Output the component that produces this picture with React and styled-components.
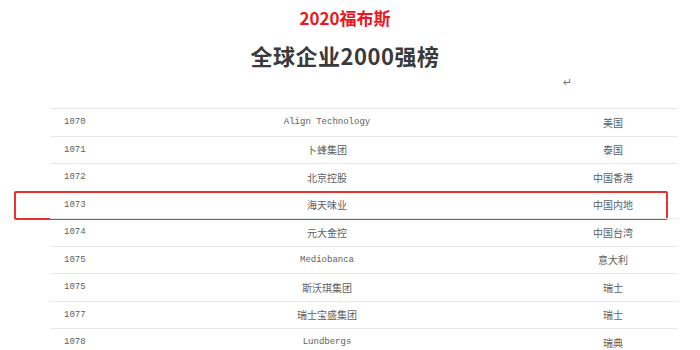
import React from 'react'
import styled, { createGlobalStyle } from 'styled-components'

const rows = [
  { no: '1070', name: 'Align Technology', latin: true, country: '美国' },
  { no: '1071', name: '卜蜂集团', country: '泰国' },
  { no: '1072', name: '北京控股', country: '中国香港' },
  { no: '1073', name: '海天味业', country: '中国内地', marked: true },
  { no: '1074', name: '元大金控', country: '中国台湾' },
  { no: '1075', name: 'Mediobanca', latin: true, country: '意大利' },
  { no: '1075', name: '斯沃琪集团', country: '瑞士' },
  { no: '1077', name: '瑞士宝盛集团', country: '瑞士' },
  { no: '1078', name: 'Lundbergs', latin: true, country: '瑞典' },
]

const GlobalStyle = createGlobalStyle`
  body {
    margin: 0;
    background: #fff;
    font-family: "Noto Sans CJK SC", "Noto Sans", sans-serif;
  }
`

const App = () => {
  return (
    <Page>
      <GlobalStyle />
      <Header>
        <SubTitle>2020福布斯</SubTitle>
        <Title>全球企业2000强榜</Title>
        <Return>↵</Return>
      </Header>

      <Table>
        {rows.map((r, i) => (
          <Row key={i} $marked={r.marked}>
            <Num>{r.no}</Num>
            <Name $latin={r.latin}>{r.name}</Name>
            <span />
            <Country>{r.country}</Country>
          </Row>
        ))}
      </Table>
    </Page>
  )
}

export default App

const Page = styled.div`
  width: 700px;
  height: 350px;
  overflow: hidden;
`

const Header = styled.div`
  display: flex;
  flex-direction: column;
  align-items: center;
  padding-top: 7px;
  padding-right: 10px;
  height: 101px;
  box-sizing: border-box;
`

const SubTitle = styled.h2`
  margin: 0;
  font-size: 17px;
  line-height: 22px;
  font-weight: 700;
  color: #f0141e;
`

const Title = styled.h1`
  margin: 12px 0 0 0;
  font-size: 22px;
  line-height: 28px;
  font-weight: 700;
  color: #3a3a3a;
  letter-spacing: 0.5px;
`

const Return = styled.div`
  align-self: flex-start;
  margin: 7px 0 0 563px;
  font-size: 11px;
  line-height: 14px;
  color: #777;
  font-family: "DejaVu Sans", sans-serif;
`

const Table = styled.div`
  margin: 7px 0 0 50px;
  width: 628px;
`

const Row = styled.div`
  position: relative;
  display: grid;
  grid-template-columns: 140px 274px 1fr 130px;
  align-items: center;
  height: 27.5px;
  border-top: 1px solid ${(p) => (p.$marked ? 'transparent' : '#e8e8e8')};
  box-sizing: border-box;
  color: #606060;

  ${(p) =>
    p.$marked &&
    `
    &::after {
      content: '';
      position: absolute;
      left: -36px;
      right: 10px;
      top: -1px;
      bottom: -2px;
      border: 2px solid #e8322f;
      border-radius: 2px;
      background: transparent;
    }
  `}
`

const Num = styled.span`
  padding-left: 14px;
  font-family: "Liberation Mono", "DejaVu Sans Mono", monospace;
  font-size: 9px;
`

const Name = styled.span`
  text-align: center;
  font-family: ${(p) =>
    p.$latin ? '"Liberation Mono", monospace' : '"Noto Sans CJK SC", sans-serif'};
  font-size: ${(p) => (p.$latin ? '9px' : '10px')};
`

const Country = styled.span`
  text-align: center;
  font-size: 10px;
`
